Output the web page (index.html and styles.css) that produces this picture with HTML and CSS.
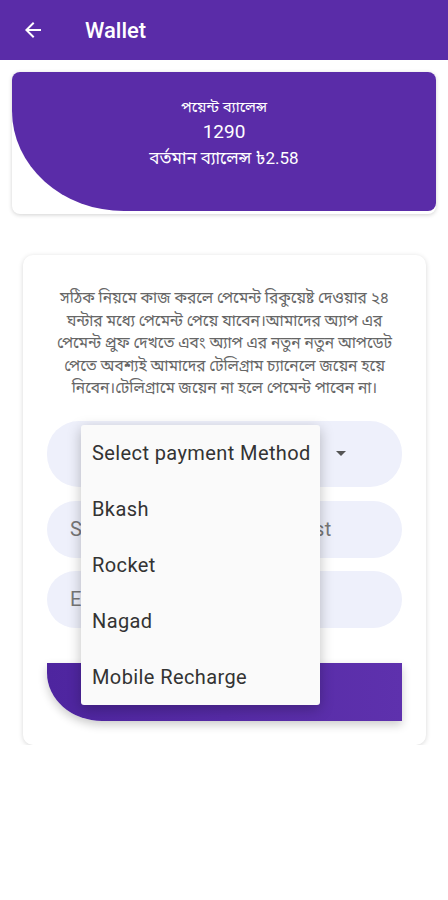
FILE: index.html
```html
<!DOCTYPE html>
<html lang="bn">
<head>
    <meta charset="UTF-8">
    <meta name="viewport" content="width=device-width, initial-scale=1.0">
    <title>Wallet</title>
    <link rel="stylesheet" href="styles.css">
</head>
<body>
    <!-- App bar -->
    <header class="app-bar">
        <svg class="back-icon" viewBox="0 0 24 24" width="24" height="24">
            <path d="M20 11H7.83l5.59-5.59L12 4l-8 8 8 8 1.41-1.41L7.83 13H20v-2z" fill="#fff"/>
        </svg>
        <h1 class="app-title">Wallet</h1>
    </header>

    <!-- Balance card -->
    <div class="balance-card">
        <div class="balance-inner">
            <p class="balance-label">পয়েন্ট ব্যালেন্স</p>
            <p class="balance-points">1290</p>
            <p class="balance-current">বর্তমান ব্যালেন্স ৳2.58</p>
        </div>
    </div>

    <!-- Withdraw card -->
    <div class="withdraw-card">
        <p class="notice">
            সঠিক নিয়মে কাজ করলে পেমেন্ট রিকুয়েষ্ট দেওয়ার ২৪<br>
            ঘন্টার মধ্যে পেমেন্ট পেয়ে যাবেন।আমাদের অ্যাপ এর<br>
            পেমেন্ট প্রুফ দেখতে এবং অ্যাপ এর নতুন নতুন আপডেট<br>
            পেতে অবশ্যই আমাদের টেলিগ্রাম চ্যানেলে জয়েন হয়ে<br>
            নিবেন।টেলিগ্রামে জয়েন না হলে পেমেন্ট পাবেন না।
        </p>

        <div class="select-wrap">
            <div class="field field-select">
                <span class="select-text">Select payment Method</span>
                <span class="caret"></span>
            </div>
            <!-- open dropdown -->
            <ul class="menu">
                <li>Select payment Method</li>
                <li>Bkash</li>
                <li>Rocket</li>
                <li>Nagad</li>
                <li>Mobile Recharge</li>
            </ul>
        </div>

        <div class="field"><span class="placeholder">Select payment method first</span></div>
        <div class="field"><span class="placeholder">Enter amount</span></div>

        <button class="submit-btn">Withdraw</button>
    </div>
</body>
</html>
```

FILE: styles.css
```css
body {
    margin: 0;
    padding: 0;
    background: #fff;
    font-family: Roboto, "Noto Sans", "Noto Sans Bengali", sans-serif;
    color: #333;
}

.app-bar {
    height: 60px;
    background-color: #5a2ca8;
    display: flex;
    align-items: center;
    padding-left: 21px;
    box-sizing: border-box;
}

.back-icon {
    display: block;
}

.app-title {
    margin: 0 0 0 40px;
    color: #fff;
    font-size: 22px;
    font-weight: 500;
}

/* balance card */
.balance-card {
    margin: 12px 12px 0;
    height: 142px;
    background: #fff;
    border-radius: 8px;
    box-shadow: 0 1px 4px rgba(0, 0, 0, 0.18);
}

.balance-inner {
    height: 139px;
    background-color: #5a2ca8;
    border-radius: 8px 8px 8px 0;
    border-bottom-left-radius: 112px 100px;
    color: #fff;
    text-align: center;
    box-sizing: border-box;
    padding-top: 24px;
}

.balance-inner p {
    margin: 0;
}

.balance-label {
    font-size: 15px;
    line-height: 22px;
}

.balance-points {
    font-size: 19px;
    line-height: 28px;
}

.balance-current {
    font-size: 17px;
    line-height: 24px;
}

/* withdraw card */
.withdraw-card {
    margin: 41px 22px 0 23px;
    background: #fff;
    border-radius: 10px;
    box-shadow: 0 1px 5px rgba(0, 0, 0, 0.16);
    padding: 32px 24px 24px;
    display: flex;
    flex-direction: column;
}

.notice {
    margin: 0 0 21px;
    text-align: center;
    font-size: 15.5px;
    line-height: 22.5px;
    color: #666;
    white-space: nowrap;
}

.select-wrap {
    position: relative;
    margin-bottom: 14px;
}

.field {
    height: 57px;
    border-radius: 32px;
    background-color: #eef0fb;
    display: flex;
    align-items: center;
    padding: 0 23px;
    font-size: 20px;
    letter-spacing: 0.4px;
    margin-bottom: 13px;
}

.field-select {
    height: 66px;
    margin-bottom: 0;
    justify-content: space-between;
    padding-left: 45px;
    padding-right: 56px;
}

.select-text {
    color: #333;
}

.caret {
    width: 0;
    height: 0;
    border-left: 5px solid transparent;
    border-right: 5px solid transparent;
    border-top: 5px solid #555;
}

.placeholder {
    color: #777;
}

.menu {
    position: absolute;
    left: 34px;
    top: 4px;
    width: 239px;
    margin: 0;
    padding: 0;
    list-style: none;
    background: #fafafa;
    border-radius: 3px;
    box-shadow: 0 4px 14px rgba(0, 0, 0, 0.25);
    z-index: 2;
}

.menu li {
    height: 56px;
    line-height: 56px;
    padding-left: 11px;
    font-size: 20px;
    letter-spacing: 0.4px;
    color: #333;
}

.submit-btn {
    margin-top: 22px;
    height: 58px;
    border: none;
    background: linear-gradient(90deg, #4e259f, #5e31ad);
    border-bottom-left-radius: 55px 48px;
    color: #fff;
    font-size: 18px;
    font-family: inherit;
    box-shadow: 0 4px 10px rgba(0, 0, 0, 0.2);
}
```
